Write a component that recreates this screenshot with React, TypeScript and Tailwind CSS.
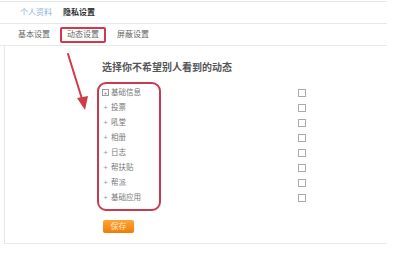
import React from 'react';

const items = ['基础信息', '投票', '吼堂', '相册', '日志', '帮扶贴', '帮派', '基础应用'];

const App: React.FC = () => {
  return (
    <div className="relative w-[396px] h-[258px] bg-white font-['Liberation_Sans','Noto_Sans_CJK_SC',sans-serif] text-[#666]">
      <div className="mt-px w-[387px] border-t border-[#e8e8e8]">
        <div className="flex h-[22px] items-center border-b border-[#e8e8e8] pl-[20px] text-[8px]">
          <span className="text-[#8db3dc]">个人资料</span>
          <span className="ml-[11px] font-bold text-[#333]">隐私设置</span>
        </div>
        <div className="flex h-[22px] items-center border-b border-[#e8e8e8] pl-[18px] text-[8px]">
          <span>基本设置</span>
          <span className="ml-[10px] rounded-[2px] border-2 border-[#d2374a] px-[5px] leading-[12px]">动态设置</span>
          <span className="ml-[11px]">屏蔽设置</span>
        </div>
        <div className="ml-[4px] h-[198px] border-b border-l border-[#e8e8e8] pl-[92px] pt-[15px]">
          <div className="pl-[5px] text-[10px] font-bold leading-[14px] text-[#555]">选择你不希望别人看到的动态</div>
          <div className="mt-[7px] flex">
            <div className="w-[64px] rounded-[9px] border-2 border-[#c93a4e] pt-[1px] pb-[4px] pl-[3px]">
              {items.map((item, i) => (
                <div key={item} className="flex h-[15px] items-center text-[7.5px] text-[#777]">
                  {i === 0 ? (
                    <span className="mr-[2px] flex h-[7px] w-[7px] items-center justify-center border border-[#999] text-[6px] leading-none">+</span>
                  ) : (
                    <span className="ml-[1px] mr-[3px] w-[5px] text-center text-[8px] leading-none text-[#999]">+</span>
                  )}
                  <span>{item}</span>
                </div>
              ))}
            </div>
            <div className="ml-[137px] pt-[3px]">
              {items.map((item) => (
                <div key={item} className="flex h-[15px] items-center">
                  <span className="h-[8px] w-[8px] border border-[#aaa] bg-white" />
                </div>
              ))}
            </div>
          </div>
          <button className="ml-[6px] mt-[9px] h-[13px] w-[31px] rounded-[2px] bg-gradient-to-b from-[#ffa533] to-[#f07c00] text-[8px] leading-[13px] text-[#ffe9cc]">
            保存
          </button>
        </div>
      </div>
      <svg className="absolute left-0 top-0" width="396" height="258" viewBox="0 0 396 258">
        <line x1="68" y1="53" x2="82" y2="98" stroke="#d23a4a" strokeWidth="2" strokeLinecap="round" />
        <polygon points="77,97 88,95 85,109" fill="#d23a4a" />
      </svg>
    </div>
  );
};

export default App;
